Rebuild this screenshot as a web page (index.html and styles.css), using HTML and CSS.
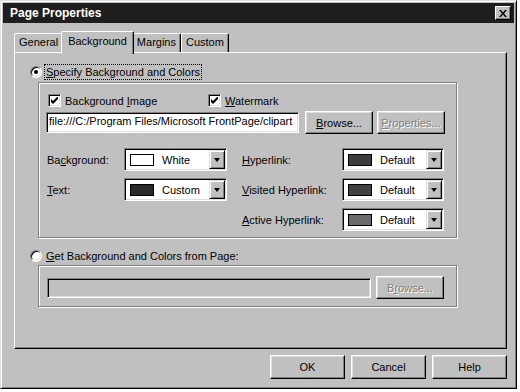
FILE: index.html
```html
<!DOCTYPE html>
<html lang="en">
<head>
    <meta charset="UTF-8">
    <title>Page Properties</title>
    <link rel="stylesheet" href="styles.css">
</head>
<body>

    <div class="window">
        <!-- Title Bar -->
        <div class="titlebar">
            <span class="title">Page Properties</span>
            <span class="close">
                <svg width="8" height="7" viewBox="0 0 8 7"><path d="M0 0h2l2 2.5L6 0h2L5 3.5 8 7H6L4 4.5 2 7H0l3-3.5z" fill="#000"/></svg>
            </span>
        </div>

        <div class="content">
            <!-- Tabs -->
            <div class="tabs">
                <div class="tab">General</div>
                <div class="tab active">Background</div>
                <div class="tab">Margins</div>
                <div class="tab">Custom</div>
            </div>

            <div class="panel">
                <div class="radio-row">
                    <span class="radio checked"></span>
                    <span class="focus"><u>S</u>pecify Background and Colors</span>
                </div>

                <div class="group first">
                    <div class="check-row">
                        <span class="check wide">
                            <span class="box"><svg width="7" height="7" viewBox="0 0 7 7"><path d="M0 2v3l2 2 5-5V-1L2 4z" fill="#000"/></svg></span>
                            <span>Background <u>I</u>mage</span>
                        </span>
                        <span class="check">
                            <span class="box"><svg width="7" height="7" viewBox="0 0 7 7"><path d="M0 2v3l2 2 5-5V-1L2 4z" fill="#000"/></svg></span>
                            <span><u>W</u>atermark</span>
                        </span>
                    </div>

                    <div class="field-row">
                        <div class="field">file:///C:/Program Files/Microsoft FrontPage/clipart</div>
                        <button class="btn"><u>B</u>rowse...</button>
                        <button class="btn disabled gap"><u>P</u>roperties...</button>
                    </div>

                    <div class="colors">
                        <span>Ba<u>c</u>kground:</span>
                        <div class="combo"><span class="swatch" style="background:#ffffff"></span><span class="value">White</span><span class="arrow"></span></div>
                        <span class="right-label"><u>H</u>yperlink:</span>
                        <div class="combo"><span class="swatch" style="background:#3c3c3c"></span><span class="value">Default</span><span class="arrow"></span></div>

                        <span><u>T</u>ext:</span>
                        <div class="combo"><span class="swatch" style="background:#2a2a2a"></span><span class="value">Custom</span><span class="arrow"></span></div>
                        <span class="right-label"><u>V</u>isited Hyperlink:</span>
                        <div class="combo"><span class="swatch" style="background:#414141"></span><span class="value">Default</span><span class="arrow"></span></div>

                        <span></span>
                        <span></span>
                        <span class="right-label"><u>A</u>ctive Hyperlink:</span>
                        <div class="combo"><span class="swatch" style="background:#6a6a6a"></span><span class="value">Default</span><span class="arrow"></span></div>
                    </div>
                </div>

                <div class="radio-row second">
                    <span class="radio"></span>
                    <span class="plain"><u>G</u>et Background and Colors from Page:</span>
                </div>

                <div class="group last">
                    <div class="field-row">
                        <div class="field off"></div>
                        <button class="btn disabled">B<u>r</u>owse...</button>
                    </div>
                </div>
            </div>

            <!-- Dialog Buttons -->
            <div class="buttons">
                <button class="btn big">OK</button>
                <button class="btn big">Cancel</button>
                <button class="btn big">Help</button>
            </div>
        </div>
    </div>

</body>
</html>
```

FILE: styles.css
```css
/* Classic dialog look */
body {
    margin: 0;
    background-color: #ffffff;
    font-family: "Liberation Sans", Arial, sans-serif;
    font-size: 11px;
    color: #000;
}

u {
    text-underline-offset: 1px;
}

.window {
    width: 517px;
    height: 389px;
    box-sizing: border-box;
    background-color: #c0c0c0;
    border: 1px solid;
    border-color: #dfdfdf #000 #000 #dfdfdf;
    box-shadow: inset 1px 1px #fff, inset -1px -1px #808080;
    padding: 2px;
}

/* Title Bar */
.titlebar {
    height: 20px;
    background-color: #1e1e1e;
    display: flex;
    align-items: center;
    justify-content: space-between;
    padding: 0 3px 0 7px;
}

.title {
    color: #fff;
    font-weight: bold;
    font-size: 12px;
}

.close {
    width: 16px;
    height: 14px;
    box-sizing: border-box;
    background-color: #c0c0c0;
    border: 1px solid;
    border-color: #fff #000 #000 #fff;
    box-shadow: inset -1px -1px #808080;
    display: flex;
    align-items: center;
    justify-content: center;
}

.content {
    padding: 8px 0 0 11px;
}

/* Tabs */
.tabs {
    display: flex;
    align-items: flex-end;
    height: 21px;
}

.tab {
    height: 19px;
    box-sizing: border-box;
    padding: 0 4px;
    line-height: 17px;
    border-top: 1px solid #fff;
    border-left: 1px solid #fff;
    border-right: 1px solid #000;
    box-shadow: inset -1px 0 #808080;
    border-radius: 2px 2px 0 0;
    background-color: #c0c0c0;
}

.tab.active {
    height: 23px;
    margin: 0 -2px -2px;
    padding: 0 6px;
    line-height: 18px;
    position: relative;
    z-index: 1;
}

/* Tab Panel */
.panel {
    width: 493px;
    height: 297px;
    box-sizing: border-box;
    border: 1px solid;
    border-color: #fff #000 #000 #fff;
    box-shadow: inset -1px -1px #808080;
    padding: 10px 0 0 15px;
}

.radio-row {
    display: flex;
    align-items: center;
    height: 17px;
    margin-bottom: 2px;
}

.radio-row.second {
    margin-top: 9px;
    margin-bottom: 1px;
}

.radio {
    width: 12px;
    height: 12px;
    box-sizing: border-box;
    border-radius: 50%;
    background-color: #fff;
    border: 1px solid;
    border-color: #808080 #fff #fff #808080;
    box-shadow: inset 1px 1px #000, inset -1px -1px #dfdfdf;
    display: flex;
    align-items: center;
    justify-content: center;
}

.radio.checked::after {
    content: "";
    width: 4px;
    height: 4px;
    border-radius: 50%;
    background-color: #000;
}

.focus {
    margin-left: 2px;
    padding: 0 1px;
    line-height: 14px;
    border: 1px dotted #000;
}

.plain {
    margin-left: 4px;
}

/* Group Boxes */
.group {
    margin-left: 8px;
    width: 419px;
    box-sizing: border-box;
    border: 1px solid #808080;
    box-shadow: inset 1px 1px #fff, 1px 1px #fff;
    padding: 11px 0 6px 8px;
}

.group.last {
    padding: 10px 0 7px 8px;
}

.check-row {
    display: flex;
    height: 13px;
    margin-left: 1px;
}

.check {
    display: flex;
    align-items: center;
    gap: 4px;
}

.check.wide {
    width: 160px;
}

.box {
    width: 13px;
    height: 13px;
    box-sizing: border-box;
    background-color: #fff;
    border: 1px solid;
    border-color: #808080 #fff #fff #808080;
    box-shadow: inset 1px 1px #000, inset -1px -1px #dfdfdf;
    display: flex;
    align-items: center;
    justify-content: center;
}

.field-row {
    display: flex;
    align-items: center;
    height: 23px;
    margin-top: 4px;
}

.group.last .field-row {
    margin-top: 0;
}

.field {
    width: 253px;
    height: 21px;
    box-sizing: border-box;
    margin-left: -1px;
    margin-right: 6px;
    padding: 0 2px;
    line-height: 17px;
    background-color: #fff;
    border: 1px solid;
    border-color: #808080 #fff #fff #808080;
    box-shadow: inset 1px 1px #000, inset -1px -1px #dfdfdf;
    white-space: nowrap;
    overflow: hidden;
}

.field.off {
    width: 324px;
    height: 20px;
    margin-left: 0;
    margin-right: 5px;
    background-color: #c0c0c0;
}

/* Buttons */
.btn {
    width: 68px;
    height: 23px;
    box-sizing: border-box;
    padding: 0;
    font-family: inherit;
    font-size: 11px;
    color: #000;
    background-color: #c0c0c0;
    border: 1px solid;
    border-color: #fff #000 #000 #fff;
    box-shadow: inset -1px -1px #808080, inset 1px 1px #dfdfdf;
}

.btn.gap {
    margin-left: 4px;
}

.btn.disabled {
    color: #808080;
    text-shadow: 1px 1px #fff;
}

.btn.big {
    width: 75px;
    height: 24px;
}

.buttons {
    width: 493px;
    display: flex;
    justify-content: flex-end;
    gap: 6px;
    margin-top: 6px;
}

/* Colour Pickers */
.colors {
    display: grid;
    grid-template-columns: 77px 103px 115px 102px;
    grid-auto-rows: 23px;
    row-gap: 7px;
    align-items: center;
    margin-top: 14px;
}

.right-label {
    margin-left: 15px;
}

.combo {
    height: 23px;
    box-sizing: border-box;
    display: flex;
    align-items: center;
    padding: 0 1px 0 5px;
    background-color: #fff;
    border: 1px solid;
    border-color: #808080 #fff #fff #808080;
    box-shadow: inset 1px 1px #000, inset -1px -1px #dfdfdf;
}

.swatch {
    width: 24px;
    height: 12px;
    box-sizing: border-box;
    border: 1px solid #000;
}

.value {
    margin-left: 8px;
}

.arrow {
    margin-left: auto;
    width: 16px;
    height: 19px;
    box-sizing: border-box;
    background-color: #c0c0c0;
    border: 1px solid;
    border-color: #dfdfdf #000 #000 #dfdfdf;
    box-shadow: inset 1px 1px #fff, inset -1px -1px #808080;
    display: flex;
    align-items: center;
    justify-content: center;
}

.arrow::after {
    content: "";
    border-left: 3.5px solid transparent;
    border-right: 3.5px solid transparent;
    border-top: 4px solid #000;
}
```
